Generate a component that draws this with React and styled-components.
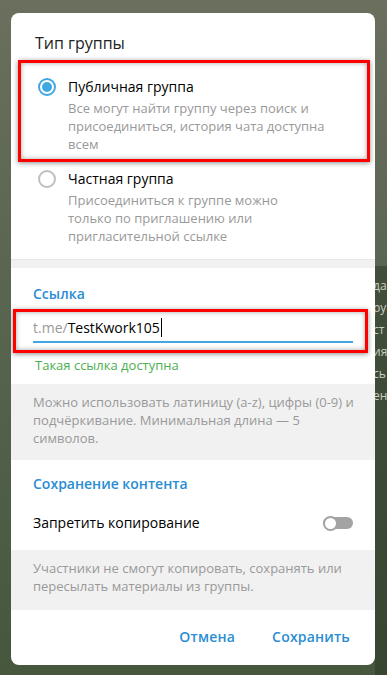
import React from "react";
import styled, { createGlobalStyle } from "styled-components";

const GlobalStyle = createGlobalStyle`
  html, body {
    margin: 0;
    padding: 0;
  }
  body {
    background: linear-gradient(180deg, #6b6f5e 0%, #5a6651 40%, #46573d 100%);
    font-family: "Open Sans", "Noto Sans", sans-serif;
    -webkit-font-smoothing: antialiased;
  }
`;

const Page = styled.div`
  display: flex;
  height: 675px;
  padding-left: 11px;
  box-sizing: border-box;
  overflow: hidden;
`;

const Dialog = styled.div`
  position: relative;
  z-index: 1;
  width: 364px;
  height: 652px;
  margin-top: 13px;
  background: #fff;
  border-radius: 8px;
  overflow: hidden;
  display: flex;
  flex-direction: column;
`;

const Side = styled.div`
  flex: 1;
  display: flex;
  flex-direction: column;
  overflow: hidden;
`;

const SideChat = styled.div`
  margin-top: 266px;
  flex: 1;
  background: rgba(35, 50, 30, 0.45);
  padding-top: 9px;
  margin-left: -2px;
  color: #c9cdc3;
  font-size: 12px;
  line-height: 22px;
  white-space: nowrap;
`;

const TypeSection = styled.div`
  padding: 19px 0 6px;
`;

const Title = styled.div`
  padding: 0 24px;
  font-size: 16px;
  line-height: 22px;
  color: #222;
  margin-bottom: 15px;
`;

const Option = styled.div`
  position: relative;
  display: flex;
  gap: 12px;
  padding: 8px 22px 8px 27px;

  ${({ $highlighted }) =>
    $highlighted &&
    `
    &::after {
      content: "";
      position: absolute;
      top: -9px;
      bottom: -1px;
      left: 7px;
      right: 5px;
      border: 3px solid #ff0000;
      box-shadow: 0 1px 5px rgba(0, 0, 0, 0.45), inset 0 0 5px rgba(0, 0, 0, 0.35);
      pointer-events: none;
    }
  `}
`;

const Radio = styled.div`
  flex: none;
  width: 18px;
  height: 18px;
  margin-top: 1px;
  box-sizing: border-box;
  border-radius: 50%;
  border: 2px solid ${({ $checked }) => ($checked ? "#40a7e3" : "#bfbfbf")};
  display: flex;
  align-items: center;
  justify-content: center;

  &::before {
    content: "";
    width: 10px;
    height: 10px;
    border-radius: 50%;
    background: ${({ $checked }) => ($checked ? "#40a7e3" : "transparent")};
  }
`;

const OptionText = styled.div`
  display: flex;
  flex-direction: column;
  gap: 2px;
`;

const OptionLabel = styled.div`
  font-size: 14px;
  line-height: 20px;
  color: #000;
`;

const Hint = styled.div`
  font-size: 13px;
  line-height: 18px;
  color: #999;
`;

const Divider = styled.div`
  height: 9px;
  background: #f1f1f1;
  border-top: 1px solid #e8e8e8;
  box-sizing: border-box;
`;

const Section = styled.div`
  padding: ${({ $top }) => $top}px 22px ${({ $bottom }) => $bottom}px;
`;

const SectionTitle = styled.div`
  font-size: 14px;
  line-height: 20px;
  font-weight: 600;
  color: #2b8dd3;
`;

const InputWrap = styled.div`
  position: relative;
  margin-top: 14px;
  border-bottom: 2px solid #40a7e3;
  font-size: 14px;
  line-height: 20px;
  padding-bottom: 3px;

  &::after {
    content: "";
    position: absolute;
    top: -9px;
    bottom: -12px;
    left: -20px;
    right: -15px;
    border: 3px solid #ff0000;
    box-shadow: 0 1px 5px rgba(0, 0, 0, 0.45), inset 0 0 5px rgba(0, 0, 0, 0.35);
    pointer-events: none;
  }
`;

const Prefix = styled.span`
  color: #999;
`;

const Value = styled.span`
  color: #000;
  border-right: 1px solid #000;
  padding-right: 1px;
`;

const Status = styled.div`
  margin-top: 13px;
  padding-left: 2px;
  font-size: 13px;
  line-height: 18px;
  color: #4caf50;
`;

const Note = styled.div`
  background: #f1f1f1;
  padding: 9px 20px ${({ $bottom }) => $bottom}px 22px;
  font-size: 13px;
  line-height: 18px;
  color: #999;
  white-space: nowrap;
`;

const ToggleRow = styled.div`
  margin-top: 19px;
  display: flex;
  align-items: center;
  justify-content: space-between;
  font-size: 14px;
  line-height: 20px;
  color: #000;
`;

const Toggle = styled.div`
  position: relative;
  width: 30px;
  height: 15px;
  display: flex;
  align-items: center;

  &::before {
    content: "";
    width: 100%;
    height: 12px;
    border-radius: 6px;
    background: #a3a3a3;
  }
`;

const Knob = styled.div`
  position: absolute;
  left: 0;
  top: 0;
  width: 15px;
  height: 15px;
  box-sizing: border-box;
  border-radius: 50%;
  border: 2px solid #a3a3a3;
  background: #fff;
`;

const Footer = styled.div`
  flex: 1;
  display: flex;
  justify-content: flex-end;
  align-items: center;
  gap: 37px;
  padding: 0 25px 2px 0;
`;

const Button = styled.div`
  font-size: 14px;
  font-weight: 600;
  color: #2b8dd3;
  letter-spacing: 0.2px;
`;

export default function App() {
  return (
    <>
      <GlobalStyle />
      <Page>
        <Dialog>
          <TypeSection>
            <Title>Тип группы</Title>
            <Option $highlighted>
              <Radio $checked />
              <OptionText>
                <OptionLabel>Публичная группа</OptionLabel>
                <Hint>
                  Все могут найти группу через поиск и
                  <br />
                  присоединиться, история чата доступна
                  <br />
                  всем
                </Hint>
              </OptionText>
            </Option>
            <Option>
              <Radio />
              <OptionText>
                <OptionLabel>Частная группа</OptionLabel>
                <Hint>
                  Присоединиться к группе можно
                  <br />
                  только по приглашению или
                  <br />
                  пригласительной ссылке
                </Hint>
              </OptionText>
            </Option>
          </TypeSection>
          <Divider />
          <Section $top={16} $bottom={10}>
            <SectionTitle>Ссылка</SectionTitle>
            <InputWrap>
              <Prefix>t.me/</Prefix>
              <Value>TestKwork105</Value>
            </InputWrap>
            <Status>Такая ссылка доступна</Status>
          </Section>
          <Note $bottom={13}>
            Можно использовать латиницу (a-z), цифры (0-9) и
            <br />
            подчёркивание. Минимальная длина — 5
            <br />
            символов.
          </Note>
          <Section $top={14} $bottom={17}>
            <SectionTitle>Сохранение контента</SectionTitle>
            <ToggleRow>
              Запретить копирование
              <Toggle>
                <Knob />
              </Toggle>
            </ToggleRow>
          </Section>
          <Note $bottom={15}>
            Участники не смогут копировать, сохранять или
            <br />
            пересылать материалы из группы.
          </Note>
          <Footer>
            <Button>Отмена</Button>
            <Button>Сохранить</Button>
          </Footer>
        </Dialog>
        <Side>
          <SideChat>
            да
            <br />
            ру
            <br />
            ст
            <br />
            ия
            <br />
            сь
            <br />
            ен
          </SideChat>
        </Side>
      </Page>
    </>
  );
}
